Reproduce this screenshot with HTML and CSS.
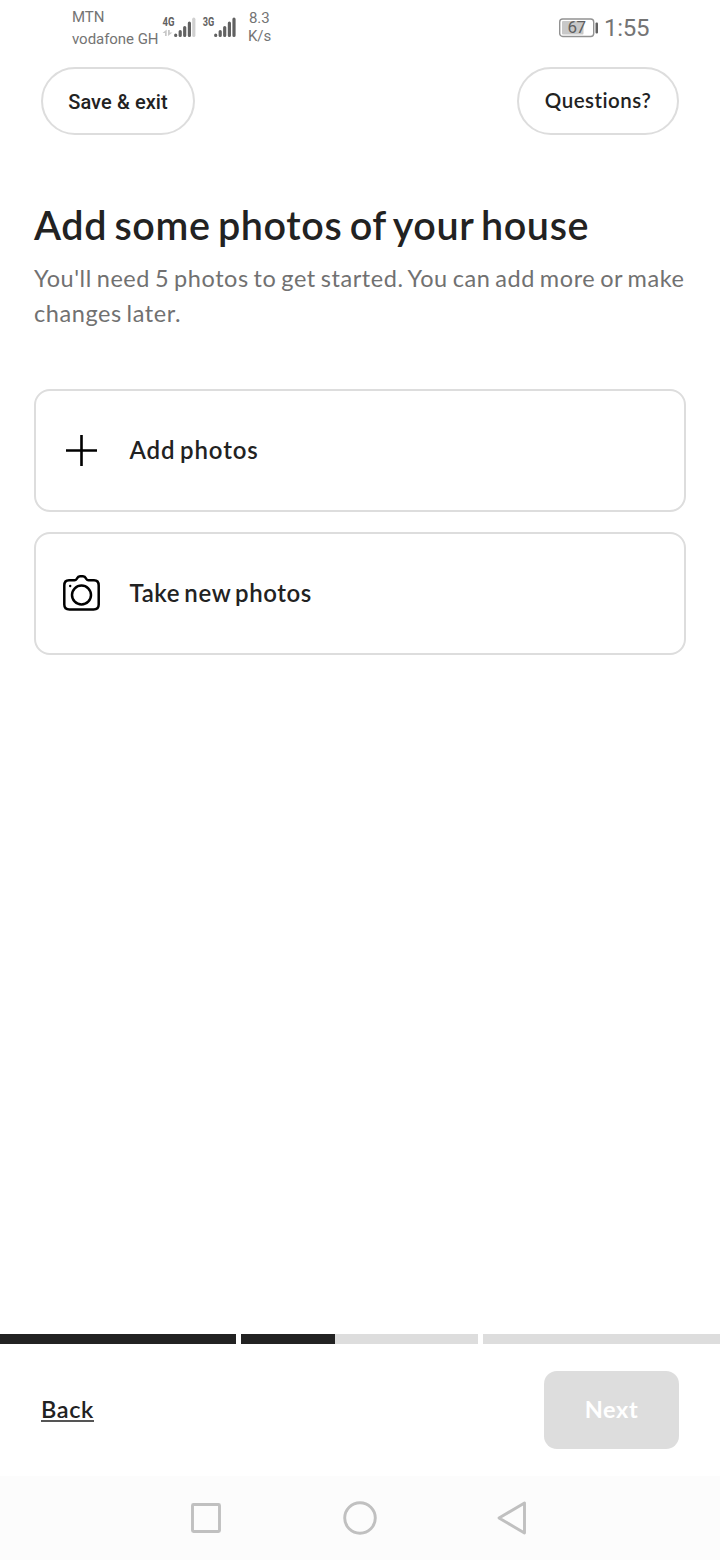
FILE: index.html
```html
<!DOCTYPE html>
<html lang="en">
<head>
<meta charset="utf-8">
<title>Add photos</title>
<link rel="stylesheet" href="styles.css">
</head>
<body>
<div class="screen">
  <div class="status">
    <div class="carriers"><span class="mtn">MTN</span><span class="voda">vodafone GH</span></div>
    <svg class="signals" width="78" height="26" viewBox="0 0 78 26">
      <text class="net" x="0.500" y="10.500" textLength="12" lengthAdjust="spacingAndGlyphs">4G</text>
      <text class="net" x="40.700" y="10.500" textLength="11.500" lengthAdjust="spacingAndGlyphs">3G</text>
      <g fill="#c8c8c8"><path d="M.5 18L4.700 14.500V21H3V18ZM6 15H7.800V17.500H10.500L6 21Z"/></g>
      <g stroke="#616161" stroke-width="3.200" stroke-linecap="round">
        <path d="M13.700 20.200v.2M18.200 16.500v3.900M22.700 12.500v7.900M27.400 8.200v12.200M53.700 20.200v.2M58.200 16.500v3.900M62.700 12.500v7.900M67.400 8.200v12.200M72 4.200v16.200"/>
        <path stroke="#d0d0d0" d="M31.800 4.200v16.200"/>
      </g>
    </svg>
    <div class="speed"><span class="rate">8.3</span><span class="unit">K/s</span></div>
    <svg class="battery" width="40" height="20" viewBox="0 0 40 20">
      <rect x=".7" y="1" width="34" height="17.500" rx="3" fill="#fff" stroke="#929292" stroke-width="1.400"/>
      <rect x="3" y="3" width="21.500" height="13.500" rx="1" fill="#c8c8c8"/>
      <rect x="36.500" y="4.500" width="2.500" height="11" rx="1" fill="#616161"/>
      <text class="charge" x="8.500" y="15.400" textLength="18.500">67</text>
    </svg>
    <span class="clock">1:55</span>
  </div>
  <header class="top">
    <button class="pill save">Save &amp; exit</button>
    <button class="pill ask">Questions?</button>
  </header>
  <main class="content">
    <h1 class="title">Add some photos of your house</h1>
    <p class="lead">You'll need 5 photos to get started. You can add more or make<br>changes later.</p>
    <button class="card">
      <svg class="icon" width="40" height="40" viewBox="0 0 40 40"><path d="M20.500 4v31M5 19.500h31" stroke="#000" stroke-width="2.600"/></svg>
      <span class="label add">Add photos</span>
    </button>
    <button class="card">
      <svg class="icon" width="40" height="40" viewBox="-.5 0 40 40" fill="none" stroke="#000" stroke-width="2.500"><path d="M7.500 6.300H13Q14.300 6.300 15.200 4.800Q16.600 2.300 18.500 2.300H21.500Q23.400 2.300 24.800 4.800Q25.700 6.300 27 6.300H32.500Q37.200 6.300 37.200 11.500V30.500Q37.200 35.500 32 35.500H8Q2.800 35.500 2.800 30.500V11.500Q2.800 6.300 7.500 6.300Z"/><circle cx="20" cy="21" r="9.500"/><circle cx="8.700" cy="12" r="1.200" fill="#000" stroke="none"/></svg>
      <span class="label">Take new photos</span>
    </button>
  </main>
  <div class="progress"><i class="full"></i><i class="part"></i><i></i></div>
  <footer class="actions">
    <a class="back">Back</a>
    <button class="next">Next</button>
  </footer>
  <nav class="nav">
    <svg width="720" height="84" viewBox="0 0 720 84" fill="none" stroke="#c0c0c0" stroke-width="2.900" stroke-linejoin="round"><rect x="192.500" y="28.500" width="27" height="27" rx="1"/><circle cx="360" cy="42" r="15.300"/><path d="M524.500 27V57L499 42Z"/></svg>
  </nav>
</div>
</body>
</html>
```
FILE: styles.css
```css
* { box-sizing: border-box; }
body { margin: 0; background: #fff; color: #222; font-family: Lato, "Liberation Sans", sans-serif; font-variant-ligatures: none; }
button { font: inherit; font-variant-ligatures: none; color: inherit; margin: 0; padding: 0; background: #fff; border: 2px solid #ddd; }
svg { display: block; flex: none; }
.screen { width: 720px; height: 1560px; display: flex; flex-direction: column; }
.status { height: 60px; display: flex; align-items: flex-start; padding: 6px 71px 0 72px; font-family: Roboto, sans-serif; color: #747474; white-space: nowrap; }
.carriers { width: 90px; display: flex; flex-direction: column; font-size: 15px; line-height: 22px; letter-spacing: -.04px; }
.signals { margin-top: 9px; }
.net { font: 700 12px Roboto, sans-serif; fill: #616161; }
.speed { width: 40px; margin: 3px 0 0 8px; display: flex; flex-direction: column; font-size: 15px; line-height: 18px; letter-spacing: -.1px; }
.rate { padding-left: 1px; }
.battery { margin: 12px 0 0 auto; }
.charge { font: 400 17px Roboto, sans-serif; fill: #5f5f5f; }
.clock { margin-left: 5px; margin-top: 8px; font-size: 24px; line-height: 28px; width: 45px; letter-spacing: -.3px; }
.top { height: 75px; display: flex; justify-content: space-between; align-items: flex-start; padding: 7px 41px 0; }
.pill { height: 68px; border-radius: 34px; font-weight: 500; white-space: nowrap; }
.save { width: 154px; font-family: Roboto, sans-serif; font-size: 20px; letter-spacing: .1px; padding-top: 2px; }
.ask { width: 162px; font-size: 20.500px; letter-spacing: .5px; font-weight: 600; padding-bottom: 2px; }
.content { flex: 1; padding: 66px 34px 0; }
.title { margin: 0; font-size: 39.500px; line-height: 48px; font-weight: 600; letter-spacing: .6px; word-spacing: -3px; white-space: nowrap; }
.lead { margin: 12px 0 58px; font-size: 23.500px; line-height: 35px; letter-spacing: .57px; word-spacing: -1.7px; color: #717171; white-space: nowrap; }
.card { width: 100%; height: 123px; border-radius: 16px; display: flex; align-items: center; padding-left: 25px; margin-bottom: 20px; font-size: 24px; font-weight: 600; letter-spacing: .6px; word-spacing: -2.4px; }
.icon { margin-right: 28.500px; }
.label { padding-bottom: 3px; }
.add { letter-spacing: .9px; }
.progress { height: 10px; display: grid; grid-template-columns: 236px 237px 237px; gap: 5px; }
.progress i { background: #ddd; }
.progress .full { background: #222; }
.progress .part { background: linear-gradient(to right, #222 94px, #ddd 94px); }
.actions { height: 132px; display: flex; justify-content: space-between; align-items: center; padding: 0 41px; font-size: 23.500px; font-weight: 600; letter-spacing: .6px; }
.back { border-bottom: 2px solid #555; line-height: 22px; }
.next { width: 135px; height: 78px; border: 0; border-radius: 13px; background: #ddd; color: #fff; font-weight: 700; letter-spacing: .6px; padding-bottom: 2px; }
.nav { height: 84px; background: #fcfcfc; }
```
